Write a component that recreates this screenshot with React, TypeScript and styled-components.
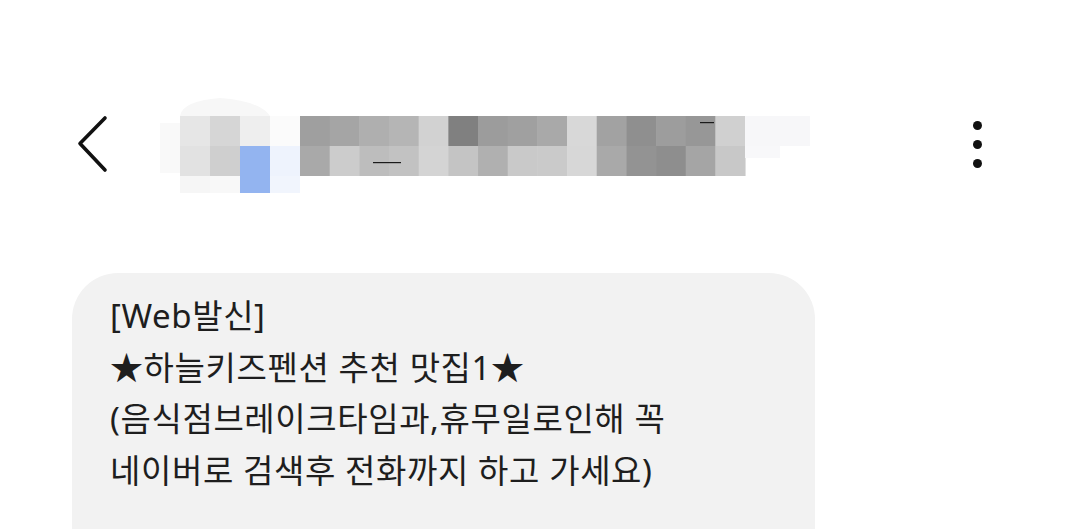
import { createGlobalStyle } from 'styled-components';
import styled from 'styled-components';

const GlobalStyle = createGlobalStyle`
	html, body {
		margin: 0;
		padding: 0;
		background: #ffffff;
	}
	body {
		font-family: "Noto Sans", "Noto Sans CJK KR", sans-serif;
		overflow: hidden;
	}
`;

const row1 = ['#9f9f9f', '#a5a5a5', '#afafaf', '#b5b5b5', '#d2d2d2', '#808080', '#9c9c9c', '#a0a0a0', '#a9a9a9', '#d8d8d8', '#a2a2a2', '#8f8f8f', '#9d9d9d', '#979797', '#d0d0d0'];
const row2 = ['#a9a9a9', '#cccccc', '#bdbdbd', '#c2c2c2', '#d4d4d4', '#c4c4c4', '#b0b0b0', '#c9c9c9', '#cacaca', '#d7d7d7', '#a9a9a9', '#939393', '#8e8e8e', '#a5a5a5', '#c8c8c8'];
const avatar = [
	['#e6e6e6', '#d6d6d6', '#eeeeee', '#fbfbfb'],
	['#e2e2e2', '#cfcfcf', '#93b4f0', '#eef3fd'],
	['#f6f6f6', '#f8f8f8', '#93b4f0', '#f1f5fd'],
];

const lines = [
	'[Web발신]',
	'★하늘키즈펜션 추천 맛집1★',
	'(음식점브레이크타임과,휴무일로인해 꼭',
	'네이버로 검색후 전화까지 하고 가세요)',
];

const Mosaic = () => {
	const step = 29.67;
	return (
		<MosaicSvg width="650" height="100" viewBox="0 0 650 100">
			<path d="M20 21 Q22 6 60 3 Q100 6 110 21 Z" fill="#f7f7f7" />
			<rect x="0" y="28" width="20" height="50" fill="#f9f9f9" />
			{avatar.map((row, r) =>
				row.map((c, i) => (
					<rect key={`a${r}-${i}`} x={20 + i * 30} y={21 + r * 30} width="30" height={r === 2 ? 17 : 30} fill={c} />
				)),
			)}
			{row1.map((c, i) => (
				<rect key={`r1-${i}`} x={140 + i * step} y="21" width={step + 0.5} height="30" fill={c} />
			))}
			{row2.map((c, i) => (
				<rect key={`r2-${i}`} x={140 + i * step} y="51" width={step + 0.5} height="30" fill={c} />
			))}
			<rect x="585" y="21" width="65" height="30" fill="#f7f7f9" />
			<rect x="585" y="51" width="35" height="12" fill="#f8f8fa" />
			<rect x="213" y="67" width="28" height="1.2" fill="#1a1a1a" />
			<rect x="540" y="27" width="14" height="1.2" fill="#1a1a1a" />
		</MosaicSvg>
	);
};

export default function App() {
	return (
		<Page>
			<GlobalStyle />
			<Header>
				<BackButton aria-label="back">
					<svg width="32" height="58" viewBox="0 0 32 58">
						<path d="M28 3 L3 28.5 L28 55" fill="none" stroke="#111" strokeWidth="3.6" strokeLinecap="round" strokeLinejoin="round" />
					</svg>
				</BackButton>
				<Mosaic />
				<Spacer />
				<MenuButton aria-label="menu">
					<Dot />
					<Dot />
					<Dot />
				</MenuButton>
			</Header>
			<Bubble>
				{lines.map((t) => (
					<Line key={t}>{t}</Line>
				))}
			</Bubble>
		</Page>
	);
}

const Page = styled.div`
	width: 1080px;
	height: 529px;
	background: #ffffff;
	overflow: hidden;
`;

const Header = styled.div`
	display: flex;
	align-items: center;
	height: 100px;
	margin-top: 95px;
	padding-left: 77px;
	padding-right: 98px;
`;

const BackButton = styled.div`
	display: flex;
	align-items: center;
	width: 32px;
	height: 58px;
	margin-top: -2px;
`;

const MosaicSvg = styled.svg`
	display: block;
	margin-left: 51px;
`;

const Spacer = styled.div`
	flex: 1;
`;

const MenuButton = styled.div`
	display: flex;
	flex-direction: column;
	align-items: center;
	gap: 10px;
	width: 10px;
	margin-top: -1px;
`;

const Dot = styled.span`
	width: 9px;
	height: 9px;
	border-radius: 50%;
	background: #111;
`;

const Bubble = styled.div`
	margin-top: 78px;
	margin-left: 72px;
	width: 743px;
	height: 300px;
	box-sizing: border-box;
	padding: 17px 38px 0;
	background: #f2f2f2;
	border-radius: 46px;
`;

const Line = styled.div`
	font-size: 33px;
	line-height: 51.5px;
	color: #1e1e1e;
	white-space: nowrap;
	letter-spacing: 0.6px;
`;
